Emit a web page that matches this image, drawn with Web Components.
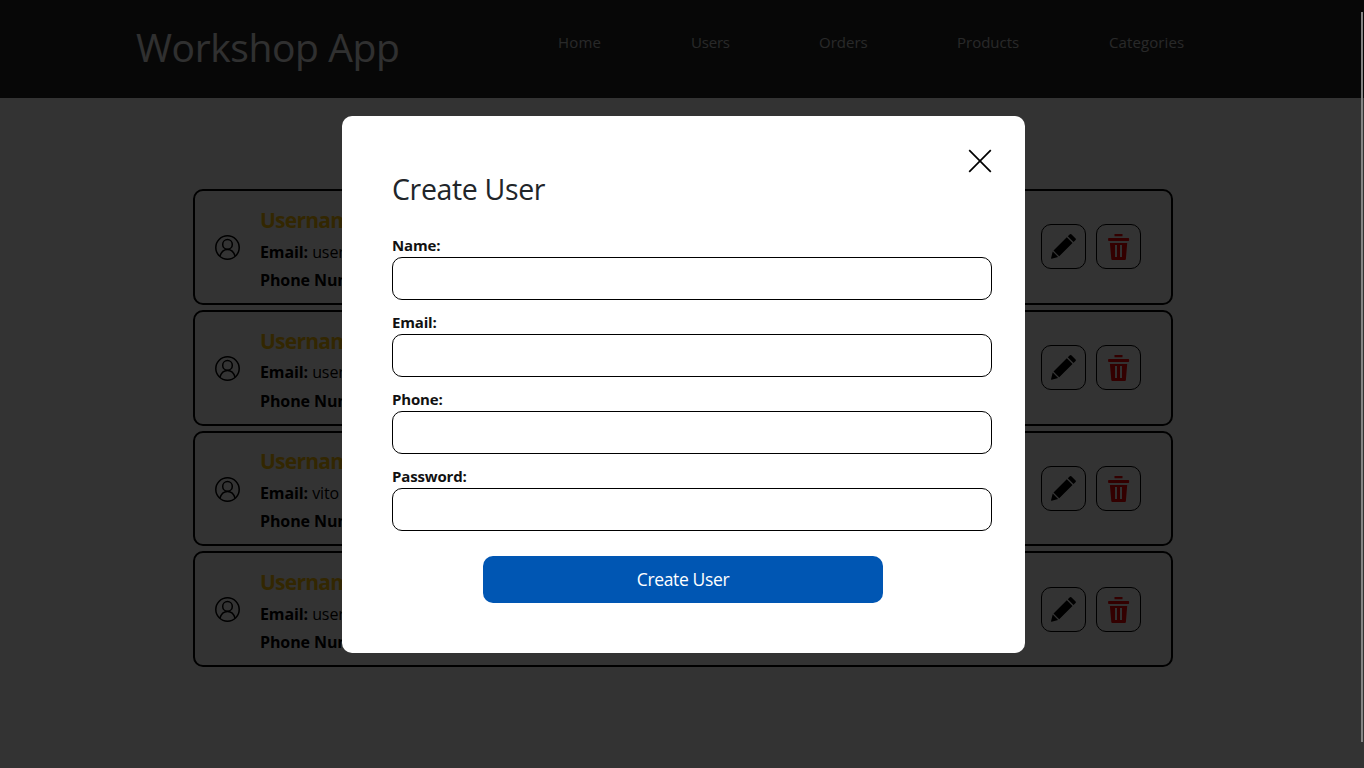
<!DOCTYPE html>
<html lang="en">
<head>
<meta charset="utf-8">
<title>Workshop App</title>
<style>
  html, body { margin: 0; height: 100%; overflow: hidden; background: #fff; }
  body { font-family: "Open Sans", "Noto Sans", sans-serif; font-size: 16px; line-height: 24px; color: #000; }
</style>
</head>
<body>
<workshop-app></workshop-app>
<script>
  const define = (name, html) => {
    const template = document.createElement('template');
    template.innerHTML = html;
    customElements.define(name, class extends HTMLElement {
      constructor() {
        super();
        this.attachShadow({ mode: 'open' }).append(template.content.cloneNode(true));
      }
    });
  };

  define('nav-link', `
    <style>
      :host { display: block; width: var(--w); font-size: 15px; line-height: 24px; color: #c9cacb; white-space: nowrap; letter-spacing: var(--ls, 0); }
    </style><slot></slot>`);

  define('app-header', `
    <style>
      :host { display: block; height: 98px; background: #232323; }
      header { display: flex; align-items: flex-start; padding-left: 136px; }
      h1 { margin: 23px 0 0; width: 422px; font-size: 39px; font-weight: 400; line-height: 48px; color: #eeeff0; letter-spacing: -.4px; white-space: nowrap; }
      nav { display: flex; gap: 90px; padding-top: 30px; }
    </style>
    <header>
      <h1>Workshop App</h1>
      <nav>
        <nav-link style="--w:43px;--ls:.15px">Home</nav-link>
        <nav-link style="--w:38px;--ls:-.2px">Users</nav-link>
        <nav-link style="--w:48px">Orders</nav-link>
        <nav-link style="--w:62px">Products</nav-link>
        <nav-link style="--w:76px;--ls:.1px">Categories</nav-link>
      </nav>
    </header>`);

  define('icon-button', `
    <style>
      :host { display: block; }
      button { display: block; box-sizing: border-box; width: 45px; height: 45px; padding: 0; border: 1px solid #000; border-radius: 10px; background: transparent; }
      ::slotted(svg) { display: block; }
    </style>
    <button><slot></slot></button>`);

  define('user-card', `
    <style>
      :host { display: flex; box-sizing: border-box; width: 980px; height: 115.7px; border: 2px solid #000; border-radius: 10px; padding: 0 30px 0 20px; align-items: center; }
      .avatar { width: 25px; height: 25px; flex: none; margin: 1.4px 20px 0 0; }
      .info { flex: 1; height: 100%; white-space: nowrap; }
      h2 { margin: 15.7px 0 6.7px; font-size: 21px; line-height: 26px; font-weight: 700; color: #ffc107; letter-spacing: -.75px; }
      p { margin: 0 0 4.3px; font-size: 16px; line-height: 24px; letter-spacing: -.1px; }
      .actions { display: flex; gap: 10px; margin-bottom: .4px; }
    </style>
    <svg class="avatar" viewBox="0 0 25 25" fill="none" stroke="#000" stroke-width="1.5"><circle cx="12.5" cy="12.5" r="11.7"/><circle cx="12.5" cy="9.4" r="4.8"/><path d="M4.9 21.2C6.1 16.9 9 14.4 12.5 14.4s6.4 2.5 7.6 6.8"/></svg>
    <div class="info">
      <h2>Username:</h2>
      <p><b>Email:</b> <slot></slot></p>
      <p><b>Phone Number:</b></p>
    </div>
    <div class="actions">
      <icon-button><svg width="43" height="43" viewBox="1 1 43 43"><path d="M28.9 10.2q.7-.6 1.4 0l4.3 4.3q.6.7 0 1.4l-2.1 2.1-5.7-5.7zM25.8 13.3l5.7 5.7L18.2 32.3l-5.7-5.7zM11.7 27.5l5.4 5.4-6.5 1.8q-.7.1-.5-.7z"/></svg></icon-button>
      <icon-button><svg width="43" height="43" viewBox="1 1 43 43"><path fill="#f00" fill-rule="evenodd" d="M18.5 10h8v2.2h-8zM12.8 14h19.6q.7 0 .7.7v1.6q0 .7-.7.7H12.8q-.7 0-.7-.7v-1.6q0-.7.7-.7zM13.9 19h17.3l-1.3 16q-.1 1-1 1H16.3q-.9 0-1-1zM19 21v12h2V21zM24 21v12h2V21z"/></svg></icon-button>
    </div>`);

  define('form-field', `
    <style>
      :host { display: block; height: 77px; }
      label { display: block; font-size: 15px; font-weight: 700; line-height: 23px; letter-spacing: -.17px; color: #111; }
      input { display: block; box-sizing: border-box; width: 600px; height: 43px; border: 1px solid #000; border-radius: 10px; background: #fff; padding: 8px; outline: 0; }
    </style>
    <label><slot></slot></label><input type="text">`);

  define('create-user-modal', `
    <style>
      :host { display: block; box-sizing: border-box; position: relative; width: 683px; height: 537px; padding: 56px 33px 50px 50px; border-radius: 10px; background: #fff; }
      h2 { margin: 0 0 27px; font-size: 28.5px; line-height: 35px; font-weight: 400; color: #212529; letter-spacing: -.35px; }
      .close { position: absolute; top: 33px; right: 33px; width: 24px; height: 24px; }
      button { display: block; width: 400px; height: 47px; margin: 14px 0 0 91px; padding: 0; border: 0; border-radius: 10px; background: #0056b3; color: #fff; font: 400 17.5px/47px "Open Sans", sans-serif; letter-spacing: -.35px; }
    </style>
    <svg class="close" viewBox="0 0 24 24" stroke="#000" stroke-width="1.7" fill="none"><path d="M1.2 1.2l21.6 21.6M22.8 1.2L1.2 22.8"/></svg>
    <h2>Create User</h2>
    <form-field>Name:</form-field>
    <form-field>Email:</form-field>
    <form-field>Phone:</form-field>
    <form-field>Password:</form-field>
    <button type="button">Create User</button>`);

  define('workshop-app', `
    <style>
      :host { display: block; height: 768px; position: relative; overflow: hidden; }
      main { display: flex; flex-direction: column; gap: 5px; padding: 91.3px 0 0 193px; }
      .overlay { position: absolute; inset: 0; box-sizing: border-box; background: rgba(0,0,0,.8); padding: 116px 0 0 342px; }
      .scrollbar { position: absolute; left: 1361px; top: 12px; width: 2px; height: 730px; background: #858585; }
    </style>
    <app-header></app-header>
    <main>
      <user-card>user</user-card>
      <user-card>user</user-card>
      <user-card>vito</user-card>
      <user-card>user</user-card>
    </main>
    <div class="overlay"><create-user-modal></create-user-modal></div>
    <div class="scrollbar"></div>`);
</script>
</body>
</html>
